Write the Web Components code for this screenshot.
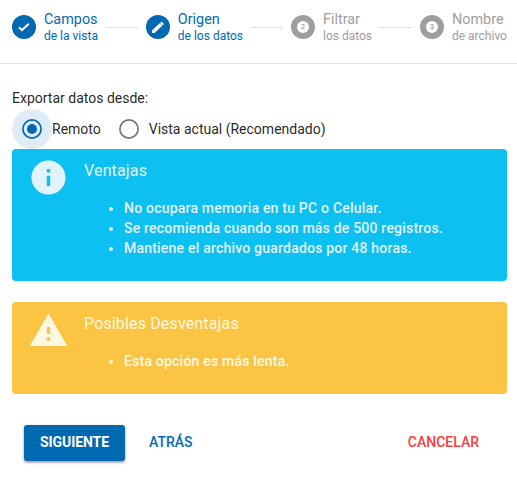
<!DOCTYPE html>
<html lang="es">
<head>
<meta charset="utf-8">
<title>Exportar datos</title>
<style>
body{margin:0;background:#fff;font-family:Roboto,sans-serif;color:rgba(0,0,0,.87);font-size:14px}
</style>
</head>
<body>
<export-wizard></export-wizard>
<script>
const define = (name, html) => customElements.define(name, class extends HTMLElement {
  connectedCallback() {
    if (this.shadowRoot) return;
    this.attachShadow({ mode: 'open' }).innerHTML = typeof html === 'function' ? html(this) : html;
  }
});

const stepIcons = {
  done: '<path fill="#fff" d="M9.9 16.5 6.3 12.9l1.3-1.3 2.3 2.2 6.3-5.7 1.3 1.3z"/>',
  edit: '<path fill="#fff" d="M6 18v-2.6l7.6-7.1 2.6 2.5L8.6 18zM14 7.9l1-.9c.3-.3.7-.3 1 0l1.6 1.6c.3.3.3.7 0 1l-.9.9z"/>',
  number: '<circle cx="12" cy="12" r="6" fill="#fff"/>'
};

define('wizard-step', el => `<style>
:host{display:flex;align-items:center;gap:8px;flex:none;color:#0069b1}
:host([icon=number]){color:#9e9e9e}
.mark{display:grid;width:24px;height:24px;place-items:center}
svg,.n{grid-area:1/1;display:block}
.n{font-size:7px;line-height:8px;color:#858585}
.t{display:block;font-size:14.4px;line-height:17px}
.s{display:block;font-size:12px;line-height:16px}
</style><span class="mark"><svg width="24" height="24" viewBox="0 0 24 24"><circle cx="12" cy="12" r="12" fill="currentColor"/>${stepIcons[el.getAttribute('icon')]}</svg>${el.hasAttribute('number') ? `<span class="n">${el.getAttribute('number')}</span>` : ''}</span>
<span><span class="t">${el.getAttribute('label')}</span><span class="s"><slot></slot></span></span>`);

define('wizard-stepper', `<style>
:host{display:flex;align-items:center;justify-content:space-between;padding:0 10px 9px 12px;box-sizing:border-box;border-bottom:1px solid #e0e0e0;height:64px}
::slotted(hr){width:32px;border:0;border-top:1px solid #e0e0e0;margin:0;flex:none}
</style><slot></slot>`);

define('radio-option', `<style>
:host{display:flex;align-items:center;height:40px;color:rgba(0,0,0,.87);font-size:14px}
svg{display:block;width:40px;height:40px;color:#757575}
.halo,.dot{display:none}
:host([checked]) svg{color:#0069b1}
:host([checked]) .halo,:host([checked]) .dot{display:block}
</style><svg viewBox="0 0 40 40"><circle class="halo" cx="20" cy="20" r="20" fill="#e0ecf5"/><circle cx="20" cy="20" r="9.1" fill="none" stroke="currentColor" stroke-width="1.7"/><circle class="dot" cx="20" cy="20" r="5" fill="currentColor"/></svg><slot></slot>`);

define('notice-panel', el => `<style>
:host{display:flex;box-sizing:border-box;border-radius:4px;padding:7.5px 15.5px;background:#0dc0f2;color:#e1f3fd;height:132px}
:host([kind=warning]){background:#fbc543;color:#fff8e1;height:92px}
svg{display:block;width:41px;height:41px;flex:none;margin-right:15.5px}
h2{font-size:16px;line-height:24px;font-weight:400;letter-spacing:.15px;margin:2px 0 15.5px}
ul{font-size:14px;line-height:20px;font-weight:500;margin:0;padding-left:40px}
::slotted(li){letter-spacing:.21px}
</style><svg viewBox="0 0 24 24" fill="currentColor"><path d="${el.getAttribute('kind') === 'warning'
  ? 'M1 21h22L12 2 1 21zm12-3h-2v-2h2v2zm0-4h-2v-4h2v4z'
  : 'M12 2C6.48 2 2 6.48 2 12s4.48 10 10 10 10-4.48 10-10S17.52 2 12 2zm1 15h-2v-6h2v6zm0-8h-2V7h2v2z'}"/></svg>
<div><h2>${el.getAttribute('heading')}</h2><ul><slot></slot></ul></div>`);

define('action-button', `<style>
:host{display:block}
button{display:block;font:500 14px/34px Roboto,sans-serif;height:36px;padding:0 16px 2px;border:0;border-radius:3px;background:none;color:#0069b1}
:host([kind=primary]) button{background:#0069b1;color:#fff;font-weight:700;letter-spacing:-.08px;box-shadow:0 1px 3px rgba(0,0,0,.3),0 2px 2px rgba(0,0,0,.16)}
:host([kind=cancel]) button{color:#fb3c3c}
</style><button><slot></slot></button>`);

define('export-wizard', `<style>
:host{display:block;width:517px;height:487px;overflow:hidden}
main{display:flex;flex-direction:column;padding:24px 10px 0 12px}
p{margin:0;font-size:14px;line-height:21px}
.radios{display:flex;gap:8px}
notice-panel + notice-panel{margin-top:21px}
footer{display:flex;padding:31px 12px 0;gap:8px}
footer action-button:last-child{margin-left:auto}
</style>
<wizard-stepper>
<wizard-step icon="done" label="Campos">de la vista</wizard-step><hr>
<wizard-step icon="edit" label="Origen">de los datos</wizard-step><hr>
<wizard-step icon="number" number="2" label="Filtrar">los datos</wizard-step><hr>
<wizard-step icon="number" number="3" label="Nombre">de archivo</wizard-step>
</wizard-stepper>
<main>
<p>Exportar datos desde:</p>
<div class="radios"><radio-option checked>Remoto</radio-option><radio-option>Vista actual (Recomendado)</radio-option></div>
<notice-panel heading="Ventajas"><li>No ocupara memoria en tu PC o Celular.</li><li>Se recomienda cuando son más de 500 registros.</li><li>Mantiene el archivo guardados por 48 horas.</li></notice-panel>
<notice-panel kind="warning" heading="Posibles Desventajas"><li>Esta opción es más lenta.</li></notice-panel>
<footer><action-button kind="primary">SIGUIENTE</action-button><action-button>ATRÁS</action-button><action-button kind="cancel">CANCELAR</action-button></footer>
</main>`);
</script>
</body>
</html>
